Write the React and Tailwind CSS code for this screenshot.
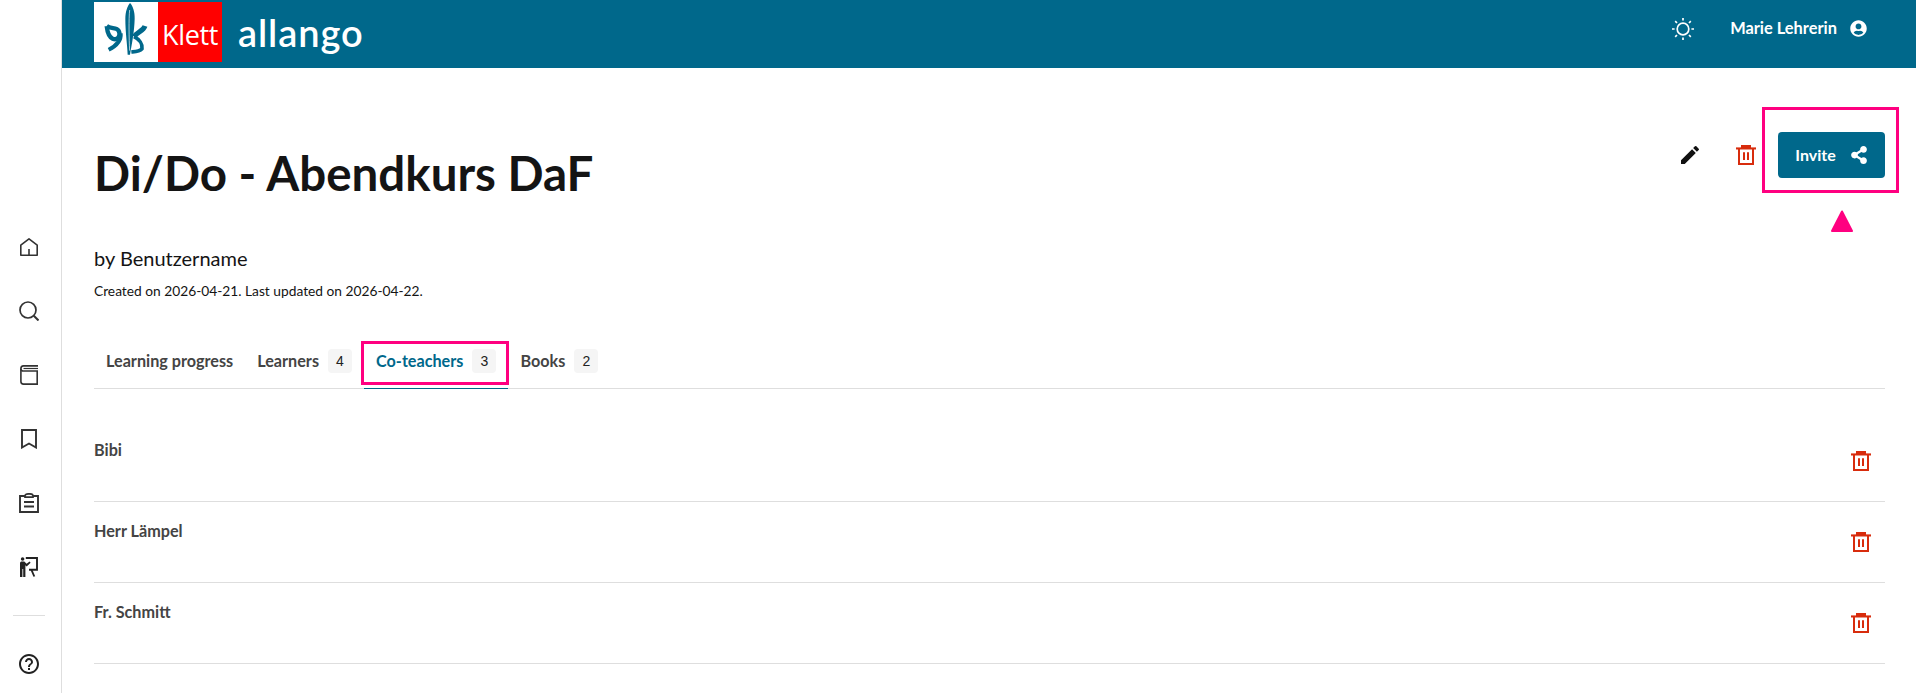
import React from 'react';
import { FaUserCircle, FaShareAlt } from 'react-icons/fa';
import { MdEdit, MdHelpOutline } from 'react-icons/md';

const TABS = [
  { label: 'Learning progress' },
  { label: 'Learners', count: 4 },
  { label: 'Co-teachers', count: 3, active: true },
  { label: 'Books', count: 2 },
];

const TEACHERS = ['Bibi', 'Herr Lämpel', 'Fr. Schmitt'];

const Trash = ({ className }) => (
  <svg viewBox="0 0 20 20" className={className} fill="currentColor">
    <path d="M5 0h10v3H5z" />
    <path d="M0 2.400h20v2.100H0z" />
    <path d="M2 4h2v14h12V4h2v16H2z" />
    <path d="M7 7.300h2V15H7zM11 7.300h2V15h-2z" />
  </svg>
);

const SunIcon = () => (
  <svg viewBox="0 0 22 22" className="w-[22px] h-[22px]" fill="none" stroke="currentColor" strokeWidth="1.700">
    <circle cx="11" cy="11" r="5.800" />
    <path d="M11 0v2.600M11 19.400V22M0 11h2.600M19.400 11H22M3.200 3.200l1.800 1.800M17 17l1.800 1.800M3.200 18.800L5 17M17 5l1.800-1.800" />
  </svg>
);

const HomeIcon = () => (
  <svg viewBox="0 0 18 18" className="w-[18px] h-[18px]" fill="none" stroke="#333" strokeWidth="1.600">
    <path d="M.8 17.200V7.200L9 .9l8.200 6.300v10z" strokeLinejoin="round" />
    <path d="M9 17v-6" />
  </svg>
);

const SearchIcon = () => (
  <svg viewBox="0 0 20 20" className="w-5 h-5" fill="none" stroke="#333" strokeWidth="1.700">
    <circle cx="9" cy="9" r="8" />
    <path d="M14.800 14.800l4.700 4.700" strokeWidth="2" />
  </svg>
);

const BookIcon = () => (
  <svg viewBox="0 0 18 20" className="w-[18px] h-5" fill="none" stroke="#333" strokeWidth="1.600">
    <path d="M18 6H3C1.800 6 .9 5 .9 3.800 .9 2 1.900 .9 3.500 .9H18" />
    <path d="M17.200 6v13.100H3.500c-1.700 0-2.600-1-2.600-2.600V3.800" />
    <path d="M3.500 3.500H18" strokeWidth="1.200" />
  </svg>
);

const BookmarkIcon = () => (
  <svg viewBox="0 0 16 20" className="w-4 h-5" fill="none" stroke="#333" strokeWidth="1.900">
    <path d="M1 1h14v17.500l-7-4-7 4z" />
  </svg>
);

const ClipboardIcon = () => (
  <svg viewBox="0 0 20 20" className="w-5 h-5" fill="none" stroke="#333" strokeWidth="1.900">
    <path d="M6 3H1v16h18V3h-5" />
    <path d="M6 4.200V2.700a4 1.900 0 0 1 8 0v1.500z" strokeWidth="1.700" />
    <path d="M5 9h10M5 13.500h10" />
  </svg>
);

const TeacherIcon = () => (
  <svg viewBox="0 0 18 20" className="w-[18px] h-5">
    <circle cx="2.600" cy="2" r="1.800" fill="#222" />
    <path d="M0 6.200c0-1 .8-1.700 1.700-1.700h2.600l2.300 2.200 3-2.200 1 1.200L6.700 9.400 5.400 8.300V20H3.200v-8h-.8v8H0z" fill="#222" />
    <path d="M5.800 1h11.200v11.800H9" fill="none" stroke="#222" strokeWidth="1.900" />
    <path d="M11.300 12.500l3 7" fill="none" stroke="#222" strokeWidth="1.900" />
  </svg>
);

const NAV = [HomeIcon, SearchIcon, BookIcon, BookmarkIcon, ClipboardIcon, TeacherIcon];

const Sidebar = () => (
  <aside className="w-[62px] shrink-0 border-r border-[#dedede] pt-[215px] flex flex-col items-center">
    {NAV.map((Icon, i) => (
      <div key={i} className="h-16 w-full shrink-0 flex items-center justify-center pr-[3px]">
        <Icon />
      </div>
    ))}
    <div className="w-8 h-px shrink-0 bg-[#dedede] mt-4 mr-[3px]"></div>
    <div className="h-24 shrink-0 flex items-center justify-center pr-[3px]">
      <MdHelpOutline size={24} color="#222" />
    </div>
  </aside>
);

const Logo = () => (
  <div className="flex h-[60px] w-32 shrink-0">
    <div className="w-16 h-full bg-white">
      <svg viewBox="12 0 192 180" className="w-16 h-[60px]" fill="none" stroke="#00688b">
        <path d="M120 3C128 10 135 30 134 50 133 90 125 130 120 158L113 158C112 130 106 90 106 50 106 30 112 12 120 3Z" fill="#00688b" stroke="none" />
        <path d="M119 24C116 50 117 110 119 146" stroke="#fff" strokeWidth="2" />
        <path d="M50 72C62 82 80 74 86 86 94 102 82 116 68 110 56 105 52 90 50 72" strokeWidth="13" />
        <path d="M92 94C94 115 82 130 56 143" strokeWidth="12" />
        <path d="M165 72C160 88 140 90 133 104" strokeWidth="15" />
        <path d="M132 104C148 112 158 126 156 140 148 149 135 149 124 150" strokeWidth="11" />
      </svg>
    </div>
    <div className="w-16 h-full bg-[#ff0000] flex items-center justify-center pt-[6px] font-['Open_Sans',sans-serif] text-white text-[27px] tracking-[-0.4px]">
      Klett
    </div>
  </div>
);

const Header = () => (
  <header className="h-[68px] bg-[#00688b] flex items-start justify-between pl-8 pr-[49px] text-white">
    <div className="flex items-center">
      <Logo />
      <span className="ml-4 font-['Lato',sans-serif] font-semibold text-[38px] leading-[64px] tracking-[0.9px]">allango</span>
    </div>
    <div className="flex items-center h-[57px]">
      <SunIcon />
      <span className="ml-[36px] text-[16.400px] font-bold">Marie Lehrerin</span>
      <FaUserCircle size={17} className="ml-[13px]" />
    </div>
  </header>
);

const Tab = ({ tab }) => (
  <div className={`h-[59px] pt-[5px] flex items-center gap-[8px] px-3 ${tab.active ? 'border-b border-[#00688b] text-[#00688b] -mb-px h-[60px]' : 'text-[#444]'}`}>
    <span className="text-[16.200px] font-bold">{tab.label}</span>
    {tab.count && (
      <span className="w-6 h-6 ml-px rounded bg-[#f5f5f5] text-[#222] text-[14px] flex items-center justify-center font-['Liberation_Sans',sans-serif]">
        {tab.count}
      </span>
    )}
  </div>
);

export default function App() {
  return (
    <div className="relative h-[693px] overflow-hidden flex bg-white text-[#141414] font-['Lato',sans-serif]">
      <Sidebar />
      <div className="flex-1 min-w-0">
        <Header />
        <main className="pl-8 pr-[31px]">
          <div className="flex items-start justify-between pt-[64px] h-[160px]">
            <h1 className="text-[47.500px] leading-[54px] font-bold mt-[14px]">Di/Do - Abendkurs DaF</h1>
            <div className="flex items-center h-[46px]">
              <MdEdit size={24} color="#111" />
              <Trash className="w-5 h-5 text-[#d82c0d] ml-[34px]" />
              <button className="ml-[22px] w-[107px] h-[46px] rounded bg-[#00688b] text-white text-[16px] font-bold flex items-center justify-center gap-[14px]">
                Invite
                <FaShareAlt size={18} />
              </button>
            </div>
          </div>
          <p className="mt-[18px] text-[20px] leading-6">by Benutzername</p>
          <p className="mt-[11px] text-[13.750px] leading-5">Created on 2026-04-21. Last updated on 2026-04-22.</p>
          <nav className="mt-[28px] flex border-b border-[#dedede]">
            {TABS.map((t) => <Tab key={t.label} tab={t} />)}
          </nav>
          <div className="pt-8">
            {TEACHERS.map((name) => (
              <div key={name} className="h-[81px] border-b border-[#dedede] flex justify-between">
                <span className="mt-[19px] text-[16.200px] font-bold text-[#444] leading-5">{name}</span>
                <Trash className="w-5 h-5 text-[#d82c0d] mt-[30px] mr-[14px]" />
              </div>
            ))}
          </div>
        </main>
      </div>
      <div className="absolute left-[1762px] top-[107px] w-[137px] h-[86px] border-[3px] border-[#ff0080]"></div>
      <div className="absolute left-[361px] top-[341px] w-[148px] h-[44px] border-[3px] border-[#ff0080]"></div>
      <svg viewBox="0 0 22 22" className="absolute left-[1831px] top-[210px] w-[22px] h-[22px]" fill="#ff0080" stroke="#ff0080" strokeWidth="2" strokeLinejoin="round">
        <path d="M11 1.500l10 19.500H1z" />
      </svg>
    </div>
  );
}
